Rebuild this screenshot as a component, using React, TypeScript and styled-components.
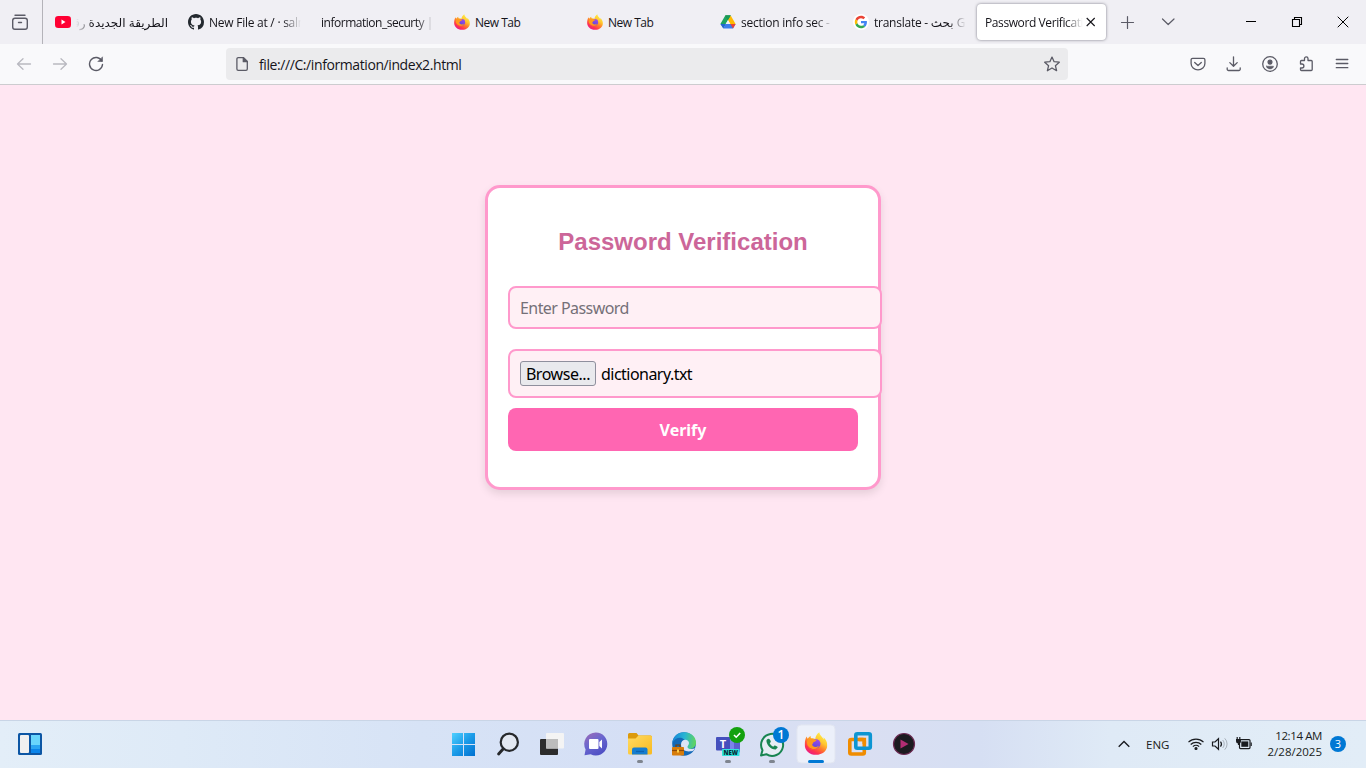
import React from "react";
import styled, { createGlobalStyle } from "styled-components";

const Global = createGlobalStyle`
  * { box-sizing: border-box; }
  html, body { margin: 0; padding: 0; overflow: hidden; }
  body { font-family: "Open Sans", "Noto Sans", "DejaVu Sans", sans-serif; color: #15141a; }
  svg { display: block; flex: none; }
`;

const Screen = styled.div`
  width: 1366px;
  height: 768px;
  display: flex;
  flex-direction: column;
  background: #ffe6f2;
`;

/* ---------- browser chrome ---------- */

const TabStrip = styled.div`
  height: 44px;
  flex: none;
  display: flex;
  align-items: center;
  background: #f0eff4;
`;

const RecentView = styled.div`
  width: 43px;
  height: 44px;
  border-right: 1px solid #b4b3b9;
  display: flex;
  align-items: center;
  padding-left: 11px;
`;

const Tabs = styled.div`
  display: flex;
  padding-left: 3px;
  height: 44px;
  align-items: center;
`;

const TabBox = styled.div<{ $active?: boolean }>`
  width: ${(p) => (p.$active ? 129 : 133)}px;
  height: 36px;
  padding: 0 ${(p) => (p.$active ? 0 : 11)}px 0 ${(p) => (p.$active ? 8 : 9)}px;
  display: flex;
  align-items: center;
  gap: ${(p) => (p.$active ? 3 : 5)}px;
  border-radius: 4px;
  background: ${(p) => (p.$active ? "#fff" : "transparent")};
  box-shadow: ${(p) => (p.$active ? "0 0 3px rgba(60,60,75,.65)" : "none")};
`;

const TabLabel = styled.span<{ $spacing: number; $rtl?: boolean; $fade?: boolean; $w?: number }>`
  flex: ${(p) => (p.$w ? "none" : "1")};
  width: ${(p) => (p.$w ? p.$w + "px" : "auto")};
  min-width: 0;
  padding-top: 1px;
  overflow: hidden;
  white-space: nowrap;
  font-size: 12px;
  line-height: 18px;
  letter-spacing: ${(p) => p.$spacing}px;
  direction: ${(p) => (p.$rtl ? "rtl" : "ltr")};
  mask-image: ${(p) =>
    p.$fade ? `linear-gradient(to ${p.$rtl ? "right" : "left"}, transparent 0, #000 18px)` : "none"};
`;

const StripButtons = styled.div`
  display: flex;
  padding-left: 14px;
  gap: 24px;
`;

const WindowButtons = styled.div`
  display: flex;
  margin-left: auto;
  padding-right: 15px;
  gap: 30px;
`;

const NavBar = styled.div`
  height: 41px;
  flex: none;
  display: flex;
  align-items: center;
  background: #f9f9fb;
  border-bottom: 1px solid #cccccf;
`;

const NavButtons = styled.div`
  width: 226px;
  padding-left: 16px;
  display: flex;
  gap: 20px;
`;

const UrlField = styled.div`
  width: 842px;
  height: 32px;
  padding: 0 8px;
  display: flex;
  align-items: center;
  gap: 9px;
  border-radius: 4px;
  background: #ebebed;
`;

const UrlText = styled.span`
  flex: 1;
  font-size: 14px;
  line-height: 20px;
  letter-spacing: -0.41px;
  padding-top: 2px;
`;

const NavTools = styled.div`
  display: flex;
  margin-left: auto;
  padding-right: 16px;
  gap: 20px;
`;

/* ---------- page ---------- */

const Page = styled.main`
  flex: 1;
  display: flex;
  justify-content: center;
  align-items: flex-start;
  padding-top: 100px;
`;

const Card = styled.form`
  width: 396px;
  height: 305px;
  padding: 20px;
  border: 3px solid #ff99cc;
  border-radius: 15px;
  background: #fff;
  box-shadow: 0 4px 8px rgba(0, 0, 0, 0.1);
  font-family: "Noto Sans", sans-serif;
`;

const Title = styled.h2`
  margin: 20px 0 30px;
  font: bold 24px/28px "Liberation Sans", sans-serif;
  color: #cc6699;
  text-align: center;
`;

const Field = styled.div<{ $h: number; $gap: number }>`
  width: 374px;
  height: ${(p) => p.$h}px;
  margin-bottom: ${(p) => p.$gap}px;
  padding: 0 10px;
  display: flex;
  align-items: center;
  gap: 5px;
  border: 2px solid #ff99cc;
  border-radius: 8px;
  background: #fff0f5;
  font-size: 16px;
  line-height: 20px;
`;

const Placeholder = styled.span`
  color: #757078;
  letter-spacing: -0.57px;
`;

const Browse = styled.span`
  width: 76px;
  height: 25px;
  border: 1px solid #8f8f9d;
  border-radius: 3px;
  background: #e9e9ed;
  color: #000;
  text-align: center;
  line-height: 24px;
  letter-spacing: -0.45px;
`;

const FileName = styled.span`
  color: #000;
  letter-spacing: -0.53px;
`;

const Verify = styled.button`
  display: block;
  width: 350px;
  height: 43px;
  padding: 1px 0 0;
  border: 0;
  border-radius: 8px;
  background: #ff66b2;
  color: #fff;
  font: bold 16px/42px "Noto Sans", sans-serif;
  letter-spacing: 0;
`;

/* ---------- taskbar ---------- */

const Taskbar = styled.div`
  height: 48px;
  flex: none;
  display: flex;
  background: linear-gradient(90deg, #e3eef8 0, #deeaf7 180px, #d7e3f6 420px, #d5dff5 640px, #dadff2 860px, #d6dff3 980px, #dfeaf6 1110px, #e2edf7 1366px);
  box-shadow: inset 0 1px 0 #c9d5e6;
`;

const Widgets = styled.div`
  width: 442px;
  padding: 13px 0 0 18px;
`;

const Apps = styled.div`
  display: flex;
`;

const AppCell = styled.div`
  width: 44px;
  height: 48px;
`;

const Tray = styled.div`
  margin-left: auto;
  padding-right: 20px;
  display: flex;
  align-items: center;
  color: #1a1c20;
`;

const Language = styled.span`
  width: 42px;
  margin-left: 16px;
  font-size: 11.5px;
  letter-spacing: 0;
`;

const Clock = styled.div`
  width: 70px;
  font-size: 11.5px;
  line-height: 16px;
  letter-spacing: 0;
  text-align: right;
`;

const ClockTime = styled.div`
  letter-spacing: -0.4px;
`;

const Count = styled.div`
  width: 16px;
  height: 16px;
  margin-left: 8px;
  border-radius: 50%;
  background: #0078d4;
  color: #fff;
  font-size: 11px;
  line-height: 16px;
  text-align: center;
`;

/* ---------- icons ---------- */

const Firefox = ({ size, id }: { size: number; id: string }) => (
  <svg width={size} height={size} viewBox="0 0 24 24">
    <defs>
      <linearGradient id={id + "a"} x1=".85" y1=".05" x2=".25" y2="1">
        <stop offset="0" stopColor="#fff44f" />
        <stop offset=".35" stopColor="#ffc62e" />
        <stop offset=".58" stopColor="#ff7a2b" />
        <stop offset=".8" stopColor="#ff3350" />
        <stop offset="1" stopColor="#e6198f" />
      </linearGradient>
      <linearGradient id={id + "b"} x1=".7" y1="0" x2=".3" y2="1">
        <stop offset="0" stopColor="#a04be8" />
        <stop offset="1" stopColor="#5b46dc" />
      </linearGradient>
    </defs>
    <path d="M15.500.2c.2 2.200 1.200 3.300 2.700 4.900.9 1 1.400 1.900 1.700 2.700.2-.7.2-1.400 0-2.300 2.300 2.200 3.900 5.100 3.900 8.300 0 5.800-5.100 10-11.800 10S.2 19.300.2 13.200c0-3.200.8-6.300 1.900-8.400l1.200 2.300C4 6 5.200 4.900 6.500 4.200c-.2 1 0 1.900.4 2.500 1.800-.2 3.300-.1 4.300.6C11.500 4.300 13 1.800 15.500.2z" fill={`url(#${id}a)`} />
    <circle cx="12" cy="12.300" r="4.700" fill={`url(#${id}b)`} />
    <path d="M3.200 8c2-1.700 4.700-1.700 6.400-.1l2.900.4c-.3 1.400-1.500 1.700-2.700 2.100-.8.300-.8.800-.7 1.300-1.300.5-1.300 2-.3 3 1.600 1.500 4.200 1.400 6.400-.5-1.200 3.400-5.200 4.600-8.400 2.700C3 15.500 1.700 11.500 3.200 8z" fill="#ff9a1c" />
    <path d="M3.300 14c1.400 3.400 4.500 4.500 7.400 4-2 1.600-6.200.6-7.400-4z" fill="#ff5a36" />
  </svg>
);

const YouTube = () => (
  <svg width="16" height="16" viewBox="0 0 16 16">
    <rect y="2" width="16" height="12" rx="3.300" fill="#ff0033" />
    <path d="M6.500 5.500v5l4-2.500z" fill="#fff" />
  </svg>
);

const GitHub = () => (
  <svg width="16" height="16" viewBox="0 0 16 16">
    <path fill="#24292f" d="M8 0C3.580 0 0 3.580 0 8c0 3.540 2.290 6.530 5.470 7.590.4.070.55-.17.55-.38 0-.19-.010-.82-.010-1.490-2.010.37-2.530-.49-2.690-.94-.090-.23-.48-.94-.82-1.130-.28-.15-.68-.52-.010-.53.63-.010 1.080.58 1.230.82.72 1.210 1.870.87 2.330.66.070-.52.28-.87.51-1.070-1.780-.2-3.640-.89-3.640-3.950 0-.87.31-1.590.82-2.150-.080-.2-.36-1.020.080-2.120 0 0 .67-.21 2.200.82.64-.18 1.320-.27 2-.27s1.360.090 2 .27c1.530-1.040 2.200-.82 2.200-.82.44 1.100.16 1.920.080 2.120.51.56.82 1.270.82 2.150 0 3.070-1.870 3.750-3.650 3.950.29.25.54.73.54 1.480 0 1.070-.010 1.930-.010 2.200 0 .21.15.46.55.38A8.010 8.010 0 0 0 16 8c0-4.420-3.580-8-8-8z" />
  </svg>
);

const Drive = () => (
  <svg width="16" height="16" viewBox="0 0 16 16">
    <path d="M5.300 1.500h5.400L8 6 3.300 14 .5 9.700z" fill="#1ea362" />
    <path d="M5.300 1.500 8 6l2.700-4.500z" fill="#188038" />
    <path d="M10.700 1.500 15.600 10h-5.300L8 6z" fill="#ffba00" />
    <path d="M10.700 1.500H5.300L8 6z" fill="#1b9a55" />
    <path d="M5.600 10h10L13 14.400H3.300z" fill="#3b7ded" />
    <path d="M15.600 10 13 14.400 10.400 10z" fill="#ea4335" />
    <path d="M.4 10 3.300 14.400 5.700 10z" fill="#2364d2" />
    <path d="M8 6.200 5.800 10h4.400z" fill="#f0eff4" />
  </svg>
);

const Google = () => (
  <svg width="16" height="16" viewBox="0 0 16 16">
    <circle cx="8" cy="8" r="8" fill="#fff" />
    <g transform="translate(1.800 1.800) scale(.2583)">
      <path fill="#ea4335" d="M24 9.500c3.500 0 6.700 1.200 9.200 3.600l6.900-6.900C35.900 2.400 30.500 0 24 0 14.600 0 6.500 5.400 2.600 13.200l8 6.200C12.400 13.700 17.700 9.500 24 9.500z" />
      <path fill="#4285f4" d="M47 24.500c0-1.600-.2-3.100-.4-4.500H24v9h12.900c-.6 3-2.300 5.500-4.800 7.200l7.700 6c4.500-4.200 7.200-10.300 7.200-17.700z" />
      <path fill="#fbbc05" d="M10.500 28.600c-.5-1.500-.8-3-.8-4.600s.3-3.100.8-4.600l-8-6.200A24 24 0 0 0 0 24c0 3.900.9 7.500 2.600 10.800z" />
      <path fill="#34a853" d="M24 48c6.500 0 11.900-2.100 15.900-5.800l-7.700-6c-2.200 1.500-4.900 2.300-8.200 2.300-6.300 0-11.600-4.200-13.500-9.900l-8 6.200C6.500 42.600 14.600 48 24 48z" />
    </g>
  </svg>
);

type IconProps = { children: React.ReactNode; color?: string; sw?: number };
const Line = ({ children, color = "#5b5b66", sw = 1.3 }: IconProps) => (
  <svg width="16" height="16" viewBox="0 0 16 16" fill="none" stroke={color} strokeWidth={sw} strokeLinecap="round" strokeLinejoin="round">
    {children}
  </svg>
);

const TABS = [
  { icon: <YouTube />, text: "الطريقة الجديدة رقم", spacing: 0, rtl: true, fade: true },
  { icon: <GitHub />, text: "New File at / · salma", spacing: -0.25, fade: true },
  { text: "information_securty | K", spacing: -0.48, fade: true },
  { icon: <Firefox size={16} id="t1" />, text: "New Tab", spacing: -0.5 },
  { icon: <Firefox size={16} id="t2" />, text: "New Tab", spacing: -0.5 },
  { icon: <Drive />, text: "section info sec - G", spacing: -0.25, fade: true },
  { icon: <Google />, text: "translate - بحث Google", spacing: -0.25, fade: true },
];

const AppIcon = ({ children }: { children: React.ReactNode }) => (
  <AppCell>
    <svg width="44" height="48" viewBox="0 0 44 48">{children}</svg>
  </AppCell>
);

const RunDot = () => <rect x="19" y="40" width="6" height="3" rx="1.500" fill="#7f858f" />;

export default function App() {
  return (
    <Screen>
      <Global />
      <TabStrip>
        <RecentView>
          <svg width="18" height="18" viewBox="0 0 18 18" fill="none" stroke="#5b5b66" strokeWidth="1.400" strokeLinecap="round">
            <path d="M4 2.200h10" />
            <rect x="1.700" y="5.200" width="14.600" height="11" rx="2.200" />
            <path d="M7.500 9.500h3" />
          </svg>
        </RecentView>
        <Tabs>
          {TABS.map((t, i) => (
            <TabBox key={i}>
              {t.icon}
              <TabLabel $spacing={t.spacing} $rtl={t.rtl} $fade={t.fade} dir={t.rtl ? "rtl" : "ltr"}>{t.text}</TabLabel>
            </TabBox>
          ))}
          <TabBox $active>
            <TabLabel $spacing={-0.4} $fade $w={98}>Password Verification</TabLabel>
            <svg width="10" height="10" viewBox="0 0 10 10" stroke="#15141a" strokeWidth="1.100">
              <path d="M.7 1l8 8M8.700 1l-8 8" />
            </svg>
          </TabBox>
        </Tabs>
        <StripButtons>
          <Line sw={1.2}><path d="M7.500 2.500v12M1.500 8.500h12" /></Line>
          <Line sw={1.2}><path d="M2.500 5l5.700 5.500L14 5" /></Line>
        </StripButtons>
        <WindowButtons>
          <Line color="#000" sw={1}><path d="M3 7.500h10" strokeLinecap="butt" /></Line>
          <Line color="#000" sw={1.1}><path d="M3.500 5.500h7v7h-7zM5.500 5.500V3.500h7v7h-2" strokeLinejoin="miter" /></Line>
          <Line color="#000" sw={1}><path d="M3 3l10 10M13 3L3 13" /></Line>
        </WindowButtons>
      </TabStrip>

      <NavBar>
        <NavButtons>
          <Line color="#b9b9c0"><path d="M14.500 8H1.700M7 2.700L1.500 8 7 13.300" /></Line>
          <Line color="#b9b9c0"><path d="M1.500 8h12.800M9 2.700L14.500 8 9 13.300" /></Line>
          <Line sw={1.4}>
            <path d="M13.800 5A6.500 6.500 0 1 0 14.500 8.500" />
            <path d="M14.500 1.200v4.300h-4.300z" fill="#5b5b66" strokeWidth=".6" />
          </Line>
        </NavButtons>
        <UrlField>
          <Line>
            <path d="M4.200 1.700H9.500L13.300 5.500V13a1.300 1.300 0 0 1-1.300 1.300H4.200A1.300 1.300 0 0 1 2.900 13V3a1.300 1.300 0 0 1 1.300-1.300z" />
            <path d="M9.300 1.700v4h4z" fill="#5b5b66" />
          </Line>
          <UrlText>file:///C:/information/index2.html</UrlText>
          <Line>
            <path d="M8 1.100l2.100 4.600 5.200.5-3.900 3.500 1.200 5L8 12l-4.600 2.700 1.200-5L.7 6.200l5.200-.5z" />
          </Line>
        </UrlField>
        <NavTools>
          <Line>
            <path d="M2.600 2.300h10.800a1.500 1.500 0 0 1 1.500 1.500v3.600a6.900 6.500 0 0 1-13.800 0V3.800A1.500 1.500 0 0 1 2.600 2.300z" />
            <path d="M4.700 6.500L8 9.500l3.300-3" />
          </Line>
          <Line>
            <path d="M7.500.8v9.400M3.800 6.600l3.700 3.700 3.700-3.700M1.200 11.800v1.400a1.300 1.300 0 0 0 1.300 1.300h10.400a1.300 1.300 0 0 0 1.300-1.300v-1.400" />
          </Line>
          <Line>
            <circle cx="8" cy="8" r="7.300" />
            <circle cx="8" cy="6.100" r="1.900" fill="#5b5b66" />
            <path d="M4.500 10.200h7c0 1.500-1.600 2.700-3.500 2.700s-3.500-1.200-3.500-2.700z" fill="#5b5b66" strokeWidth=".5" />
          </Line>
          <Line>
            <path d="M2.500 8V5.500a1 1 0 0 1 1-1H6.500V2.600a1.700 1.700 0 0 1 3.500 0v1.900h3.200a1 1 0 0 1 1 1v8a1 1 0 0 1-1 1H3.500a1 1 0 0 1-1-1V12h1.400a2 2 0 0 0 0-4z" />
          </Line>
          <Line><path d="M2.300 3.500h11.500M2.300 7.500h11.500M2.300 11.700h11.500" /></Line>
        </NavTools>
      </NavBar>

      <Page>
        <Card>
          <Title>Password Verification</Title>
          <Field $h={43} $gap={20}><Placeholder>Enter Password</Placeholder></Field>
          <Field $h={49} $gap={10}>
            <Browse>Browse...</Browse>
            <FileName>dictionary.txt</FileName>
          </Field>
          <Verify type="button">Verify</Verify>
        </Card>
      </Page>

      <Taskbar>
        <Widgets>
          <svg width="24" height="22" viewBox="0 0 24 22">
            <rect width="24" height="22" rx="1.500" fill="#0c56a4" />
            <rect x="2" y="2" width="9" height="18" rx="1" fill="#f0f0f0" />
            <rect x="13" y="2" width="9" height="10" fill="#69d6fc" />
            <rect x="13" y="12" width="9" height="4" fill="#2ba6f2" />
            <rect x="13" y="16" width="9" height="4" fill="#0a84ea" />
          </svg>
        </Widgets>
        <Apps>
          <AppIcon>
            <defs>
              <linearGradient id="win" x1="10" y1="13" x2="33" y2="36" gradientUnits="userSpaceOnUse">
                <stop offset="0" stopColor="#4fd0ff" /><stop offset=".5" stopColor="#1b9be8" /><stop offset="1" stopColor="#0070d0" />
              </linearGradient>
            </defs>
            <path d="M10 13h11v11H10zM22 13h11v11H22zM10 25h11v11H10zM22 25h11v11H22z" fill="url(#win)" />
          </AppIcon>
          <AppIcon>
            <circle cx="23.300" cy="22.200" r="8.600" fill="#e3e8f1" stroke="#26282b" strokeWidth="2.200" />
            <path d="M17.300 28.800l-4.700 5.200" stroke="#26282b" strokeWidth="2.900" strokeLinecap="round" />
          </AppIcon>
          <AppIcon>
            <rect x="10" y="19" width="18" height="16" rx="1" fill="#2c2c2c" />
            <rect x="16" y="13" width="18" height="15.500" rx="1" fill="#f4f4f4" />
            <rect x="16" y="19" width="12" height="9.500" fill="#bcbcbc" />
          </AppIcon>
          <AppIcon>
            <defs>
              <linearGradient id="chat" x1="0" y1="0" x2=".6" y2="1">
                <stop offset="0" stopColor="#a06bb5" /><stop offset=".5" stopColor="#6a67cf" /><stop offset="1" stopColor="#4f50c4" />
              </linearGradient>
            </defs>
            <path d="M21.700 12.500a11.500 11.500 0 1 1-5 21.800L10.500 35.300l1.100-5.800A11.500 11.500 0 0 1 21.700 12.500z" fill="url(#chat)" />
            <rect x="15" y="19" width="9.500" height="10" rx="1" fill="#fff" />
            <path d="M25.300 22l2.700-2.500v9l-2.700-2.500z" fill="#fff" />
          </AppIcon>
          <AppIcon>
            <defs>
              <linearGradient id="fold" x1="0" y1="0" x2="1" y2="1">
                <stop offset="0" stopColor="#ffdb62" /><stop offset="1" stopColor="#f8b920" />
              </linearGradient>
            </defs>
            <path d="M10 14.500a1.500 1.500 0 0 1 1.500-1.500h7l2 2.500H32.500a1.500 1.500 0 0 1 1.500 1.500v3H10z" fill="#dc9a0c" />
            <path d="M10 18.500h7.500l3-3h12a1.500 1.500 0 0 1 1.500 1.500v16a1.500 1.500 0 0 1-1.500 1.500h-21A1.500 1.500 0 0 1 10 33z" fill="url(#fold)" />
            <path d="M14 34.500v-5a2 2 0 0 1 2-2h11.500a2 2 0 0 1 2 2v5z" fill="#157dd0" />
            <path d="M18 31.500h8" stroke="#0d62b0" strokeWidth="1.200" />
            <RunDot />
          </AppIcon>
          <AppIcon>
            <defs>
              <linearGradient id="edg" x1="0" y1=".4" x2="1" y2=".5">
                <stop offset="0" stopColor="#1786d8" /><stop offset=".5" stopColor="#27b5d3" /><stop offset="1" stopColor="#62d65a" />
              </linearGradient>
            </defs>
            <circle cx="22" cy="24" r="11.800" fill="#1369b8" />
            <path d="M10.300 23C11 16 16 12.200 22 12.200c7 0 12 4.800 12 10.300 0 4-3 6.500-6.500 6.500-3 0-5-.8-4.500-2.300l-.4-7C19 16 13 17.500 10.300 23z" fill="url(#edg)" />
            <path d="M19 24.500c0-3 2-4.700 4.300-4.700 2 0 3.700 1.500 3.700 3.200 0 1.800-1.500 2.600-1.500 4 0 1.800 3.500 2.800 7.500 1.300l-1.500 2.200c-4 1.800-12.500 1.500-12.500-6z" fill="#dce4f6" />
            <path d="M14 27v-2h4v2" fill="none" stroke="#7b3f05" strokeWidth="1.200" />
            <rect x="10" y="27" width="12" height="8.500" rx=".8" fill="#d77c0b" />
            <path d="M10 30.500h12" stroke="#8b4907" strokeWidth="1.200" />
            <rect x="15" y="29.500" width="2" height="3" fill="#ffcf48" />
          </AppIcon>
          <AppIcon>
            <rect x="25" y="20" width="9" height="13" rx="2" fill="#5b61cf" />
            <rect x="17" y="17" width="11" height="15" rx="3" fill="#7b83eb" />
            <rect x="10" y="17" width="14" height="13.500" rx="1" fill="#4550bd" />
            <text x="17" y="27.800" fontSize="11" fontWeight="700" fontFamily="Open Sans, sans-serif" fill="#fff" textAnchor="middle">T</text>
            <rect x="16" y="29" width="17.500" height="7" rx=".8" fill="#2fe3dc" />
            <text x="24.700" y="34.700" fontSize="6" fontWeight="800" fontFamily="Open Sans, sans-serif" fill="#062c35" textAnchor="middle">NEW</text>
            <circle cx="31" cy="15" r="8" fill="#13a10e" />
            <path d="M28 15l2.200 2.200 4-4.200" fill="none" stroke="#fff" strokeWidth="1.600" />
            <RunDot />
          </AppIcon>
          <AppIcon>
            <path d="M11 35.500l1.500-5.300A11 11 0 1 1 16.300 34.200z" fill="#e6edf5" stroke="#188551" strokeWidth="2" strokeLinejoin="round" />
            <path d="M18 18.700l-1.500 1.300c-.6 4.500 4.500 9.700 9.200 9.500l2-2c.1-1-2.500-2.300-3.200-2l-1.300 1.200c-1.600-.7-2.800-2-3.500-3.500l1.100-1.200c.2-1.200-1.200-3.500-2.800-3.300z" fill="#188551" />
            <circle cx="31" cy="15" r="8" fill="#0078d4" />
            <text x="31" y="19.300" fontSize="12" fontWeight="600" fontFamily="Open Sans, sans-serif" fill="#fff" textAnchor="middle">1</text>
            <RunDot />
          </AppIcon>
          <AppIcon>
            <rect x="3" y="5" width="38" height="38" rx="4" fill="#ecf0fa" stroke="#e2e6f1" />
            <g transform="translate(10.500 12)"><Firefox size={23} id="tb" /></g>
            <rect x="14" y="40" width="16" height="3" rx="1.500" fill="#0078d4" />
          </AppIcon>
          <AppIcon>
            <g fill="none" strokeWidth="3.600">
              <rect x="11.800" y="19.500" width="14.500" height="14.500" rx="1.500" stroke="#f08c00" />
              <rect x="17.800" y="13.800" width="14.500" height="14.500" rx="1.500" stroke="#0c95d2" />
              <path d="M26.300 24v-4.500H21" stroke="#f08c00" />
            </g>
          </AppIcon>
          <AppIcon>
            <circle cx="22" cy="24" r="10.500" fill="#1c1b20" stroke="#6c2b53" strokeWidth="1.200" />
            <path d="M18.500 19.500v9l8-4.500z" fill="#b32d73" />
          </AppIcon>
        </Apps>
        <Tray>
          <svg width="12" height="8" viewBox="0 0 12 8" fill="none" stroke="#1a1c20" strokeWidth="1.400"><path d="M.7 6.800L6 1.500l5.300 5.300" /></svg>
          <Language>ENG</Language>
          <svg width="64" height="16" viewBox="0 0 64 16" fill="none" stroke="#1a1c20" strokeWidth="1.200">
            <path d="M.5 6.200a10.600 10.600 0 0 1 15 0M2.700 8.500a7.500 7.500 0 0 1 10.600 0M4.900 10.600a4.400 4.400 0 0 1 6.200 0" />
            <circle cx="8" cy="12.500" r="1" fill="#1a1c20" />
            <path d="M24.500 6h2.500l3.500-3.300v10.600L27 10h-2.500z" />
            <path d="M32.500 5.500a4 4 0 0 1 0 5" />
            <path d="M34.700 4a6 6 0 0 1 0 8M36.700 2.300a8 8 0 0 1 0 11.400" stroke="#a9b2bc" strokeWidth="1" />
            <rect x="51.500" y="3.600" width="10.500" height="9" rx="1" />
            <rect x="53.300" y="5.400" width="7" height="5.400" fill="#1a1c20" stroke="none" />
            <path d="M63.200 6.500v3.500" />
            <path d="M48 3h5v2a2.500 2.500 0 0 1-5 0z" fill="#1a1c20" stroke="none" />
            <path d="M49.200 1v2.500M51.800 1v2.500M50.500 7v2" />
          </svg>
          <Clock><ClockTime>12:14 AM</ClockTime>2/28/2025</Clock>
          <Count>3</Count>
        </Tray>
      </Taskbar>
    </Screen>
  );
}
